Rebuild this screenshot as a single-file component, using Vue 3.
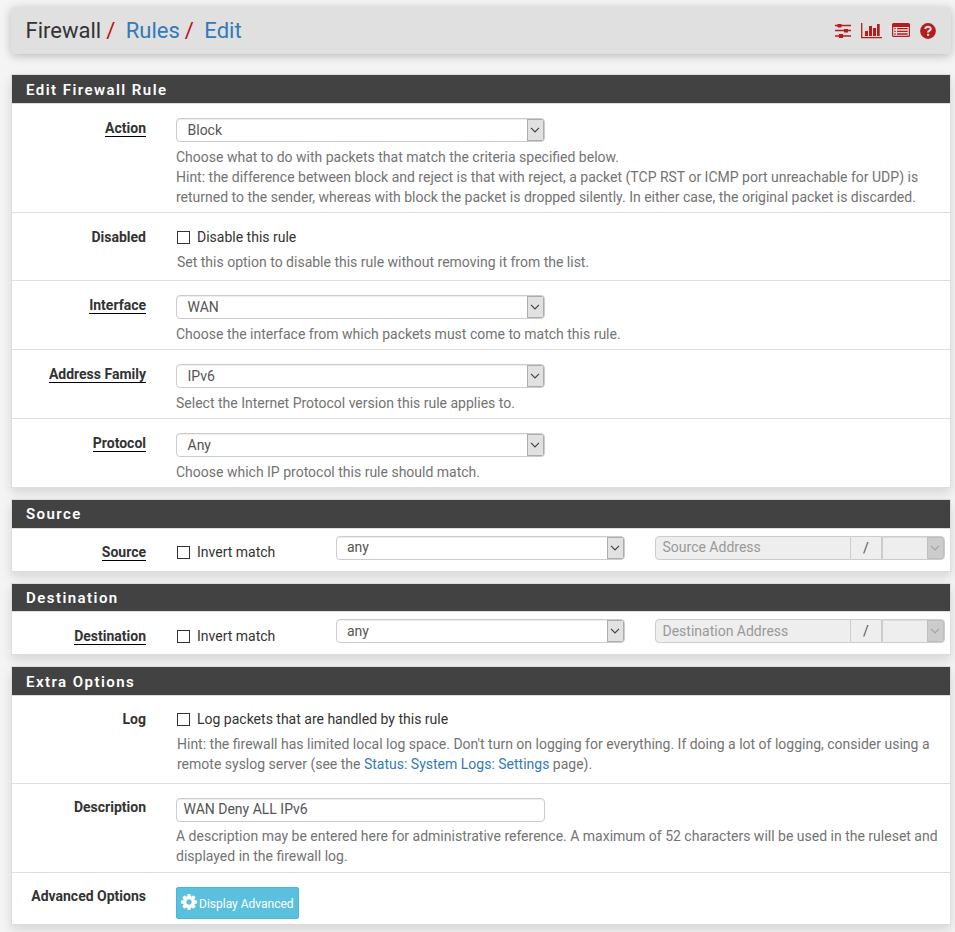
<script setup>
const crumbs = ['Rules', 'Edit']

const ruleRows = [
  {
    label: 'Action', value: 'Block', cls: 'tall',
    help: [
      'Choose what to do with packets that match the criteria specified below.',
      'Hint: the difference between block and reject is that with reject, a packet (TCP RST or ICMP port unreachable for UDP) is',
      'returned to the sender, whereas with block the packet is dropped silently. In either case, the original packet is discarded.',
    ],
  },
  { label: 'Disabled', check: 'Disable this rule', cls: 'check-row', help: ['Set this option to disable this rule without removing it from the list.'] },
  { label: 'Interface', value: 'WAN', help: ['Choose the interface from which packets must come to match this rule.'] },
  { label: 'Address Family', value: 'IPv6', help: ['Select the Internet Protocol version this rule applies to.'] },
  { label: 'Protocol', value: 'Any', cls: 'protocol', help: ['Choose which IP protocol this rule should match.'] },
]

const endpoints = [
  { name: 'Source', cls: 'source' },
  { name: 'Destination', cls: 'destination' },
]
</script>

<template>
  <div class="page">
    <header class="topbar">
      <nav class="crumbs">
        <span class="root">Firewall</span>
        <template v-for="c in crumbs" :key="c"><span class="slash">/</span><a>{{ c }}</a></template>
      </nav>
      <div class="icons">
        <svg class="ic-sliders" width="16" height="16" viewBox="0 0 16 16">
          <path d="M0 2.500h16M0 7.500h16M0 13h16" stroke="currentColor" stroke-width="1.300" />
          <path d="M2.500 1h4v3.500h-4zM9 6h4v3.500H9zM4 11h4v4H4z" fill="currentColor" />
        </svg>
        <svg class="ic-chart" width="21" height="16" viewBox="0 0 21 16">
          <path d="M.7 0v14.600H21" fill="none" stroke="currentColor" stroke-width="1.300" />
          <path d="M4 8h3v5H4zM8 3h3v10H8zM12 5h3v8h-3zM16 1h2.700v12H16z" fill="currentColor" />
        </svg>
        <svg class="ic-list" width="18" height="15" viewBox="0 0 18 15">
          <path fill-rule="evenodd" d="M1.500 0h15A1.500 1.500 0 0 1 18 1.500v11a1.500 1.500 0 0 1-1.500 1.500h-15A1.500 1.500 0 0 1 0 12.500v-11A1.500 1.500 0 0 1 1.500 0zM1.200 4v8.300q0 .5.5.5h14.600q.5 0 .5-.5V4z" fill="currentColor" />
          <path d="M2.300 5.700h1.400M5 5.700h10.700M2.300 8.400h1.400M5 8.400h10.700M2.300 11h1.400M5 11h10.700" stroke="currentColor" stroke-width="1.300" />
        </svg>
        <svg class="ic-help" width="16" height="16" viewBox="0 0 16 16">
          <circle cx="8" cy="8" r="7.900" fill="currentColor" />
          <path d="M5.200 5.900Q5.700 3.700 8.100 3.700q2.600.1 2.600 2.200 0 1-1.400 1.800Q8.100 8.300 8.100 9.600" fill="none" stroke="#e0e0e0" stroke-width="2.100" />
          <path d="M7 10.700h2.200v2.200H7z" fill="#e0e0e0" />
        </svg>
      </div>
    </header>

    <section class="panel">
      <h2>Edit Firewall Rule</h2>
      <div v-for="r in ruleRows" :key="r.label" class="row" :class="r.cls">
        <div class="label"><span :class="{ req: !r.check }">{{ r.label }}</span></div>
        <div class="field">
          <label v-if="r.check" class="check"><i class="box"></i>{{ r.check }}</label>
          <div v-else class="select">
            <span>{{ r.value }}</span>
            <b class="arrow"><svg width="10" height="6" viewBox="0 0 10 6"><path d="M1 .8l4 4 4-4" /></svg></b>
          </div>
          <p class="help"><span v-for="h in r.help" :key="h">{{ h }}</span></p>
        </div>
      </div>
    </section>

    <section v-for="e in endpoints" :key="e.name" class="panel" :class="e.cls">
      <h2>{{ e.name }}</h2>
      <div class="row endpoint">
        <div class="label"><span class="req">{{ e.name }}</span></div>
        <label class="check"><i class="box"></i>Invert match</label>
        <div class="select">
          <span>any</span>
          <b class="arrow"><svg width="10" height="6" viewBox="0 0 10 6"><path d="M1 .8l4 4 4-4" /></svg></b>
        </div>
        <div class="group">
          <div class="addr">{{ e.name }} Address</div>
          <div class="addon">/</div>
          <div class="select off">
            <span></span>
            <b class="arrow"><svg width="10" height="6" viewBox="0 0 10 6"><path d="M1 .8l4 4 4-4" /></svg></b>
          </div>
        </div>
      </div>
    </section>

    <section class="panel">
      <h2>Extra Options</h2>
      <div class="row check-row log">
        <div class="label"><span>Log</span></div>
        <div class="field">
          <label class="check"><i class="box"></i>Log packets that are handled by this rule</label>
          <p class="help">
            <span>Hint: the firewall has limited local log space. Don't turn on logging for everything. If doing a lot of logging, consider using a</span>
            <span>remote syslog server (see the <a>Status: System Logs: Settings</a> page).</span>
          </p>
        </div>
      </div>
      <div class="row desc">
        <div class="label"><span>Description</span></div>
        <div class="field">
          <div class="input">WAN Deny ALL IPv6</div>
          <p class="help">
            <span>A description may be entered here for administrative reference. A maximum of 52 characters will be used in the ruleset and</span>
            <span>displayed in the firewall log.</span>
          </p>
        </div>
      </div>
      <div class="row adv">
        <div class="label"><span>Advanced Options</span></div>
        <div class="field">
          <button class="btn">
            <svg width="16" height="16" viewBox="0 0 1536 1536"><path fill="#fff" d="M1024 768q0-106-75-181t-181-75-181 75-75 181 75 181 181 75 181-75 75-181zm512-109v222q0 12-8 23t-20 13l-185 28q-19 54-39 91 35 50 107 138 10 12 10 25t-9 23q-27 37-99 108t-94 71q-12 0-26-9l-138-108q-44 23-91 38-16 136-29 186-7 28-36 28H657q-14 0-24.500-8.500T621 1506l-28-184q-49-16-90-37l-141 107q-10 9-25 9-14 0-25-11-126-114-165-168-7-10-7-23 0-12 8-23 15-21 51-66.500t54-70.500q-27-50-41-99L29 913q-13-2-21-12.500T0 877V655q0-12 8-23t19-13l186-28q14-46 39-92-40-57-107-138-10-12-10-24 0-10 9-23 26-36 98.500-107.500T337 135q13 0 26 10l138 107q44-23 91-38 16-136 29-186 7-28 36-28h222q14 0 24.500 8.500T915 30l28 184q49 16 90 37l142-107q9-9 24-9 13 0 25 10 129 119 165 170 7 8 7 22 0 12-8 23-15 21-51 66.500t-54 70.500q26 50 41 98l183 28q13 2 21 12.500t8 23.500z" /></svg>
            <span>Display Advanced</span>
          </button>
        </div>
      </div>
    </section>
  </div>
</template>

<style>
html, body { margin: 0; background: #f4f4f4; overflow: hidden; }
</style>

<style scoped>
.page {
  box-sizing: border-box;
  width: 955px;
  height: 932px;
  padding: 7px 4px 0 11px;
  overflow: hidden;
  background: #f4f4f4;
  color: #333;
  font: 14px/20px Roboto, sans-serif;
}
.topbar {
  display: flex;
  box-sizing: border-box;
  height: 47px;
  padding: 0 15px 0 14.500px;
  margin-bottom: 20px;
  justify-content: space-between;
  align-items: center;
  background: #e0e0e0;
  border-radius: 4px;
  box-shadow: 0 2px 10px rgba(0, 0, 0, .24);
}
.crumbs { display: flex; font-size: 22px; line-height: 46px; white-space: nowrap; }
.crumbs .root { color: #333; }
.slash { color: #c00d0d; padding: 0 10.500px 0 5px; }
a { color: #337ab7; }
.icons { display: flex; align-items: center; color: #b71c1c; }
.ic-sliders { margin-right: 10px; }
.ic-chart { margin-right: 10px; }
.ic-list { margin-right: 10px; }
.panel {
  border: 1px solid #ddd;
  margin-bottom: 11px;
  background: #fff;
  box-shadow: 0 5px 10px rgba(0, 0, 0, .12);
}
h2 {
  margin: 0;
  height: 28px;
  padding-left: 14px;
  border-bottom: 1px solid #ddd;
  background: #424242;
  color: #fff;
  font-size: 15px;
  line-height: 30px;
  font-weight: 600;
  letter-spacing: 1.450px;
}
.source h2, .destination h2 { line-height: 28px; }
.destination h2 { height: 27px; }
.row {
  display: grid;
  box-sizing: border-box;
  height: 69px;
  padding-top: 14px;
  grid-template-columns: 134px 1fr;
  column-gap: 30px;
  align-items: start;
  border-bottom: 1px solid #ddd;
}
.row:last-child { border-bottom: 0; }
.tall { height: 109px; }
.check-row { height: 68px; }
.protocol { height: 68px; }
.log { height: 88px; padding-top: 13px; }
.desc { height: 89px; }
.desc .label, .adv .label { margin-top: -1px; }
.desc .help { margin-top: 4px; }
.adv { height: 51px; }
.label { text-align: right; font-weight: 700; white-space: nowrap; height: 20px; }
.label span { display: inline-block; height: 18px; }
.label .req { border-bottom: 1px solid #000; }
.check { display: flex; align-items: center; height: 20px; white-space: nowrap; }
.box {
  box-sizing: border-box;
  width: 13px;
  height: 13px;
  margin: 0 7px 0 1px;
  border: 1px solid #333;
  background: #fff;
}
.endpoint .box, .log .box { margin-top: 1px; }
.help { margin: 5px 0 0; color: #737373; }
.check-row .help { padding-left: 1px; }
.help span { display: block; white-space: nowrap; }
.select, .input {
  display: flex;
  box-sizing: border-box;
  width: 369px;
  height: 24px;
  border: 1px solid #ccc;
  border-radius: 4px;
  background: #fff;
  color: #555;
  line-height: 22px;
  box-shadow: inset 0 1px 1px rgba(0, 0, 0, .075);
  overflow: hidden;
}
.select > span { flex: 1; padding-left: 10.500px; }
.input { padding-left: 6.500px; line-height: 21px; }
.arrow {
  display: flex;
  box-sizing: border-box;
  width: 17px;
  padding-right: 1px;
  align-items: center;
  justify-content: center;
  background: #e1e1e1;
  border: 1px solid #acacac;
}
.arrow svg { flex: none; }
.arrow path { fill: none; stroke: #444; stroke-width: 1.200; }
.endpoint { height: 42px; padding-top: 7px; grid-template-columns: 134px 130px 289px 290px; }
.endpoint .label, .endpoint .check { margin-top: 6px; }
.destination .label, .destination .check { margin-top: 7px; }
.endpoint .select { width: 289px; }
.endpoint .select > span { padding-left: 10px; }
.group { display: flex; }
.addr, .addon {
  box-sizing: border-box;
  height: 24px;
  border: 1px solid #ccc;
  background: #eee;
  line-height: 22px;
}
.endpoint .select, .addr { line-height: 21px; }
.destination .select, .destination .addr { line-height: 23px; }
.addr { width: 196px; padding-left: 6.500px; color: #999; border-radius: 4px 0 0 4px; }
.addon { width: 31px; text-align: center; color: #555; border-left: 0; }
.endpoint .off { width: 63px; background: #eee; border-radius: 0 4px 4px 0; }
.off .arrow { background: #ccc; border-color: #bfbfbf; }
.off .arrow path { stroke: #a3a3a3; }
.btn {
  display: flex;
  box-sizing: border-box;
  width: 123px;
  height: 32px;
  padding: 0 0 0 4px;
  align-items: center;
  border: 1px solid #46b8da;
  border-radius: 2px;
  background: #5bc0de;
  color: #fff;
  font: 12px/18px Roboto, sans-serif;
}
.btn svg { margin: -3px 2px 0 0; flex: none; }
.btn span { white-space: nowrap; padding-top: 1px; }
</style>
